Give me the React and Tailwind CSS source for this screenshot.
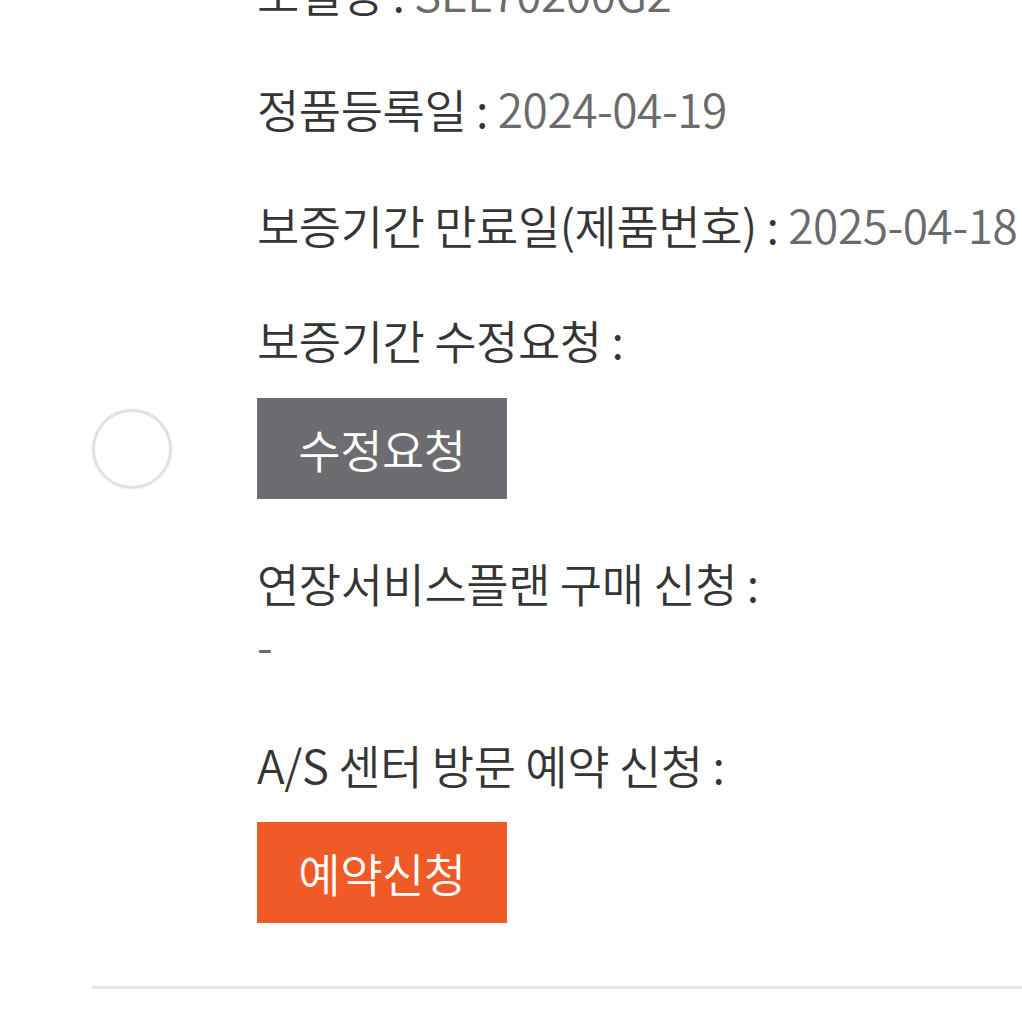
import React from 'react';

const font = { fontFamily: '"Noto Sans CJK KR", "Noto Sans", sans-serif' };

const Row = ({ label, value, className = '' }) => (
    <div className={`ml-[165px] leading-[58px] whitespace-nowrap ${className}`}>
        <span className="text-[#353535]">{label} : </span>
        {value && <span className="text-[#6b6b6b]">{value}</span>}
    </div>
);

const App = () => {
    return (
        <div className="w-[1022px] h-[1022px] overflow-hidden bg-white" style={font}>
            <div className="-mt-[37px] pl-[92px] text-[46px] font-[350] tracking-[-0.01em]">
                <Row label="모델명" value="SEL70200G2" />
                <Row label="정품등록일" value="2024-04-19" className="mt-[58px]" />
                <Row label="보증기간 만료일(제품번호)" value="2025-04-18" className="mt-[58px]" />
                <Row label="보증기간 수정요청" className="mt-[57px]" />

                {/* radio + modify button */}
                <div className="mt-[30px] flex items-center">
                    <div className="w-[80px] h-[80px] rounded-full border-[3px] border-[#e2e2e2] shadow-[0_0_2px_rgba(0,0,0,0.08)]"></div>
                    <button className="ml-[85px] w-[250px] h-[101px] bg-[#6d6c71] text-white">
                        수정요청
                    </button>
                </div>

                <Row label="연장서비스플랜 구매 신청" className="mt-[54px]" />
                <div className="ml-[165px] leading-[58px] text-[#6b6b6b] mt-[4px]">-</div>

                <Row label="A/S 센터 방문 예약 신청" className="mt-[62px]" />
                <button className="mt-[29px] ml-[165px] w-[250px] h-[101px] bg-[#ef5a27] text-white">
                    예약신청
                </button>

                <div className="mt-[63px] h-[3px] bg-[#e6e6e6]"></div>
            </div>
        </div>
    );
};

export default App;
